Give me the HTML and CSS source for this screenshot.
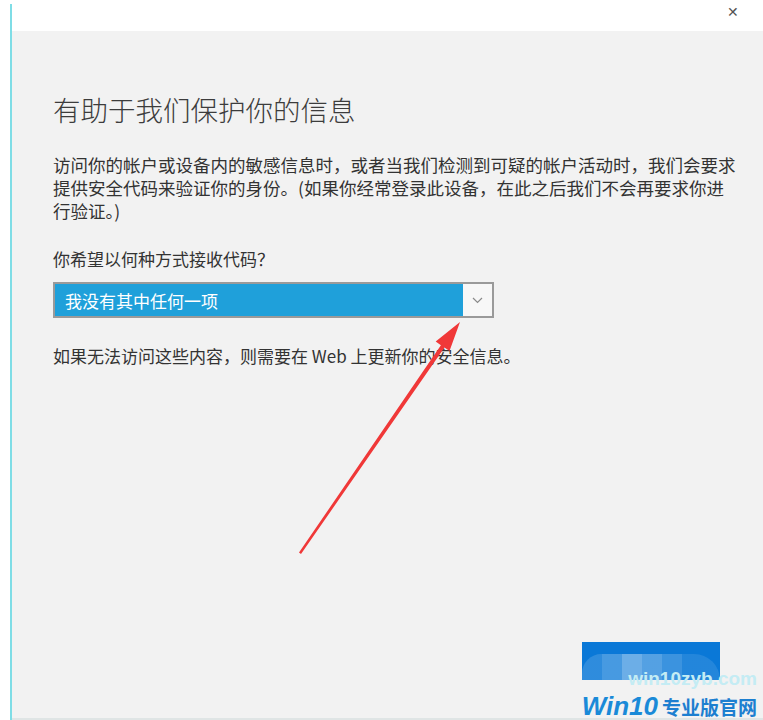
FILE: index.html
```html
<!DOCTYPE html>
<html>

<head>
  <title>有助于我们保护你的信息</title>
  <link rel="stylesheet" href="styles.css">
</head>

<body>
  <div class="window">
    <div class="titlebar">
      <span class="close">&#x2715;</span>
    </div>

    <div class="content">
      <h1>有助于我们保护你的信息</h1>
      <p class="intro">访问你的帐户或设备内的敏感信息时，或者当我们检测到可疑的帐户活动时，我们会要求<br>提供安全代码来验证你的身份。(如果你经常登录此设备，在此之后我们不会再要求你进<br>行验证。)</p>

      <label class="question" for="method">你希望以何种方式接收代码？</label>
      <div class="select" id="method">
        <span class="select-value">我没有其中任何一项</span>
        <span class="select-arrow">
          <svg width="11" height="7" viewBox="0 0 11 7">
            <path d="M1 1 L5.5 5.5 L10 1" fill="none" stroke="#8a8a8a" stroke-width="1.2" />
          </svg>
        </span>
      </div>

      <p class="note">如果无法访问这些内容，则需要在 Web 上更新你的安全信息。</p>

      <div class="footer">
        <button class="next"><span class="mosaic"></span></button>
      </div>
    </div>

    <!-- red annotation arrow drawn over the dialog -->
    <svg class="arrow" width="763" height="720" viewBox="0 0 763 720">
      <polygon fill="#f03838"
        points="460,322 449.5,351 444.5,347.6 301,554 299,552.6 440.9,345.2 435.7,341.6" />
    </svg>

    <div class="watermark">
      <span class="wm-site">win10zyb.com</span>
      <span class="wm-brand"><i>Win10</i>专业版官网</span>
    </div>
  </div>
</body>

</html>
```

FILE: styles.css
```css
html,
body {
  margin: 0;
  padding: 0;
  background-color: #fff;
}

body {
  font-family: "Noto Sans CJK SC", "Liberation Sans", sans-serif;
  width: 763px;
  height: 720px;
  overflow: hidden;
}

.window {
  position: relative;
  box-sizing: border-box;
  height: 716px;
  margin: 4px 0 0 10px;
  border-left: 2px solid #7fdde6;
  display: flex;
  flex-direction: column;
}

.titlebar {
  height: 27px;
  background-color: #fff;
  display: flex;
  justify-content: flex-end;
  align-items: flex-start;
}

.close {
  width: 14px;
  margin: 1px 22px 0 0;
  font-family: "DejaVu Sans", sans-serif;
  font-size: 14px;
  line-height: 14px;
  color: #555;
}

.content {
  flex: 1;
  background-color: #f2f2f2;
  border-bottom: 2px solid #dfe5e5;
  padding: 58px 0 0 41px;
  display: flex;
  flex-direction: column;
  align-items: flex-start;
  color: #333;
}

h1 {
  margin: 0;
  font-size: 27.5px;
  font-weight: 300;
  line-height: 40px;
  color: #3c3c3c;
}

.intro {
  margin: 24px 0 0;
  font-size: 17.5px;
  line-height: 23px;
  white-space: nowrap;
}

.question {
  display: block;
  margin-top: 25px;
  font-size: 17px;
  line-height: 23px;
}

.select {
  box-sizing: border-box;
  width: 441px;
  height: 36px;
  margin-top: 12px;
  border: 2px solid #9a9a9a;
  background-color: #1fa0da;
  display: flex;
  align-items: center;
}

.select-value {
  flex: 1;
  padding-left: 10px;
  font-size: 17px;
  color: #fff;
}

.select-arrow {
  width: 29px;
  height: 100%;
  background-color: #f7f7f7;
  display: flex;
  align-items: center;
  justify-content: center;
}

.note {
  margin: 26px 0 0;
  font-size: 17px;
  line-height: 23px;
}

.footer {
  margin-top: auto;
  align-self: stretch;
  display: flex;
  justify-content: flex-end;
  padding: 0 43px 38px 0;
}

.next {
  position: relative;
  width: 138px;
  height: 38px;
  border: none;
  padding: 0;
  background-color: #0a78d7;
  overflow: hidden;
}

.mosaic {
  position: absolute;
  left: 0;
  top: 12px;
  width: 138px;
  height: 26px;
  background:
    linear-gradient(90deg,
      rgba(255, 255, 255, 0.15) 0 20px,
      rgba(255, 255, 255, 0.25) 20px 40px,
      rgba(255, 255, 255, 0.4) 40px 60px,
      rgba(255, 255, 255, 0.3) 60px 80px,
      rgba(255, 255, 255, 0.2) 80px 100px,
      rgba(255, 255, 255, 0.1) 100px 138px);
  border-radius: 30px 40px 0 0;
}

.arrow {
  position: absolute;
  left: -12px;
  top: -4px;
  pointer-events: none;
}

.watermark {
  position: absolute;
  right: 6px;
  bottom: 2px;
  display: flex;
  flex-direction: column;
  align-items: flex-end;
}

.wm-site {
  font-family: "Liberation Sans", sans-serif;
  font-weight: bold;
  font-size: 19px;
  line-height: 20px;
  color: #c4ecf4;
  margin-bottom: 6px;
}

.wm-brand {
  font-family: "Noto Sans CJK SC", sans-serif;
  font-weight: bold;
  font-size: 19px;
  line-height: 22px;
  color: #1d7fd0;
}

.wm-brand i {
  font-family: "Liberation Sans", sans-serif;
  font-size: 26px;
  margin-right: 4px;
  color: #1a8ad8;
}
```
